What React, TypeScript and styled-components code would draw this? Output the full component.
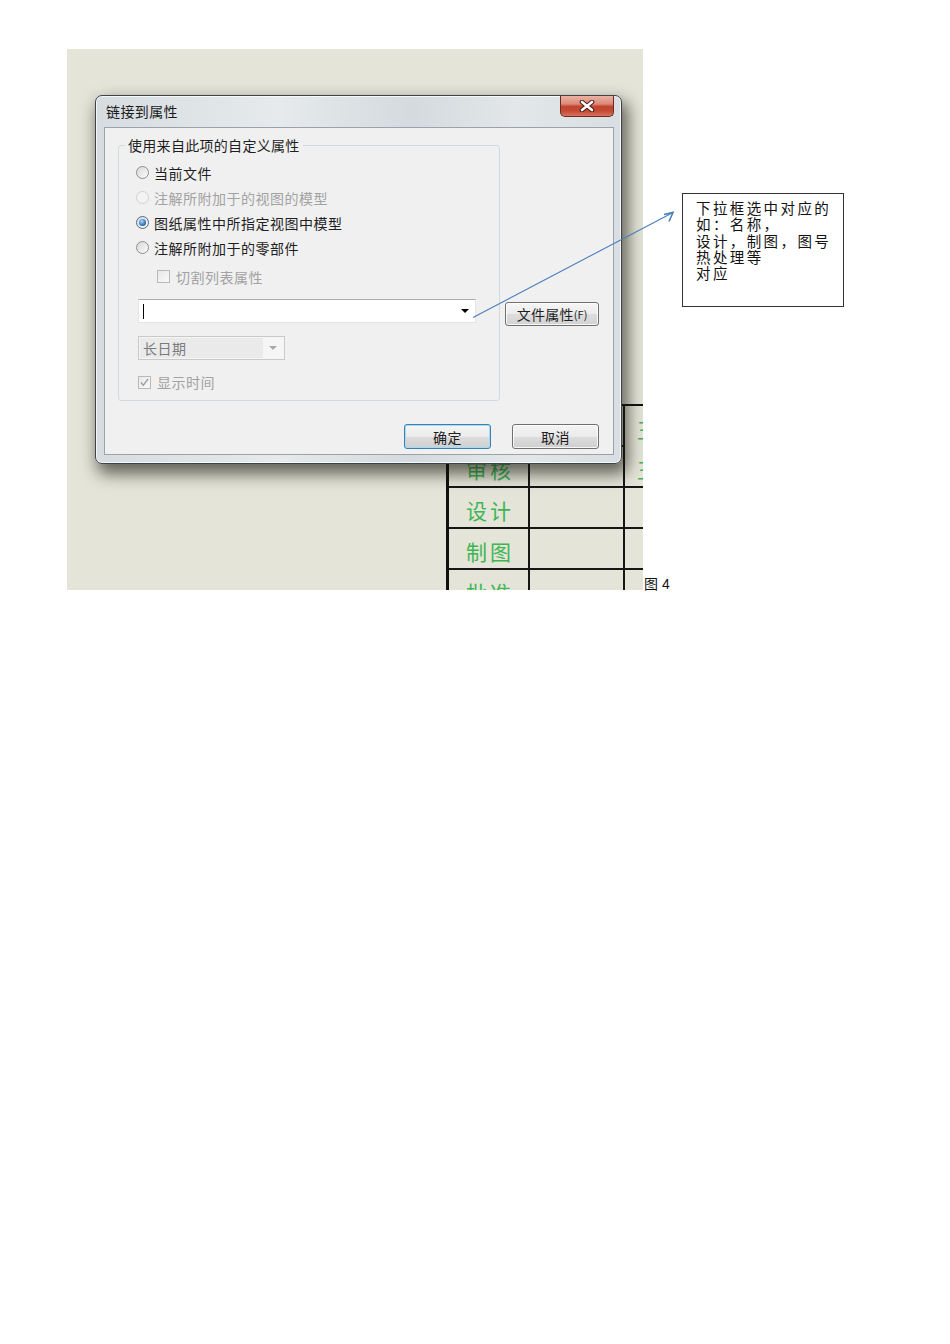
import React from 'react';
import styled, { createGlobalStyle } from 'styled-components';

const GlobalStyle = createGlobalStyle`
  html, body {
    margin: 0;
    padding: 0;
    background: #ffffff;
  }
  body {
    font-family: "Noto Sans CJK SC", "Liberation Sans", sans-serif;
  }
`;

const Page = styled.div`
  position: relative;
  width: 950px;
  height: 1344px;
  padding: 49px 0 0 67px;
  box-sizing: border-box;
`;

const FigureRow = styled.div`
  display: flex;
  align-items: flex-end;
`;

const Canvas = styled.div`
  position: relative;
  flex-shrink: 0;
  width: 576px;
  height: 541px;
  overflow: hidden;
  background: #e4e4d9;
`;

const Caption = styled.span`
  font-family: "Liberation Sans", "Noto Sans CJK SC", sans-serif;
  font-size: 14px;
  line-height: 16px;
  margin: 0 0 -2px 1px;
  color: #111;
`;

/* drawing sheet title block behind the dialog */
const TitleBlock = styled.div`
  position: absolute;
  left: 379px;
  top: 355px;
  display: grid;
  grid-template-columns: 81px 95px 120px;
  grid-auto-rows: 41px;
  border-left: 3px solid #111;
  border-top: 2px solid #111;
`;

const Cell = styled.div<{ $open?: boolean; $left?: boolean }>`
  box-sizing: border-box;
  border-right: 2px solid #161616;
  border-bottom: ${(p) => (p.$open ? 'none' : '2px solid #161616')};
  display: flex;
  align-items: center;
  justify-content: ${(p) => (p.$left ? 'flex-start' : 'center')};
  padding: 5px 0 0 ${(p) => (p.$left ? '12px' : '3px')};
  font-size: 21px;
  letter-spacing: 3px;
  color: #3db552;
`;

/* dialog window */
const Window = styled.div`
  position: absolute;
  left: 28px;
  top: 46px;
  width: 527px;
  height: 369px;
  box-sizing: border-box;
  display: flex;
  flex-direction: column;
  border: 1px solid #3d4347;
  border-radius: 7px;
  background: linear-gradient(90deg, #d6dce0 0%, #e6eaec 35%, #d4dade 60%, #e3e7e9 80%, #d8dee1 100%);
  box-shadow: inset 0 0 0 1px rgba(255, 255, 255, 0.75), 4px 8px 16px 2px rgba(20, 20, 10, 0.62);
  color: #1e1e1e;
`;

const TitleBar = styled.div`
  height: 31px;
  display: flex;
  align-items: flex-start;
  padding: 0 7px 0 10px;
`;

const Title = styled.span`
  font-size: 14px;
  letter-spacing: 0.4px;
  line-height: 31px;
  color: #1a1a1a;
`;

const CloseButton = styled.div`
  margin-left: auto;
  width: 54px;
  height: 21px;
  box-sizing: border-box;
  border: 1px solid #6e2a22;
  border-top: none;
  border-radius: 0 0 5px 5px;
  background: linear-gradient(#eab2a5 0%, #dc8a78 40%, #c4452e 52%, #c24a33 75%, #d9745f 100%);
  display: flex;
  align-items: center;
  justify-content: center;
`;

const Client = styled.div`
  flex: 1;
  margin: 0 7px 8px 8px;
  background: #f0f0f0;
  border: 1px solid #9aa3a9;
  display: flex;
  flex-direction: column;
`;

const Body = styled.div`
  display: flex;
  align-items: flex-start;
  padding: 17px 0 0 13px;
`;

const GroupBox = styled.div`
  width: 382px;
  height: 256px;
  box-sizing: border-box;
  border: 1px solid #d2dadf;
  border-radius: 3px;
`;

const Legend = styled.div`
  display: table;
  margin: -11px 0 0 6px;
  padding: 0 3px;
  background: #f0f0f0;
  font-size: 14px;
  line-height: 20px;
  letter-spacing: 0.3px;
`;

const Options = styled.div`
  display: flex;
  flex-direction: column;
  padding: 5px 0 0 17px;
`;

const OptionRow = styled.div<{ $disabled?: boolean }>`
  height: 25px;
  display: flex;
  align-items: center;
  gap: 5px;
  font-size: 14px;
  letter-spacing: 0.5px;
  color: ${(p) => (p.$disabled ? '#a2a2a2' : '#1e1e1e')};
`;

const Radio = styled.span<{ $checked?: boolean; $disabled?: boolean }>`
  width: 13px;
  height: 13px;
  box-sizing: border-box;
  border-radius: 50%;
  border: 1px solid ${(p) => (p.$disabled ? '#d2d2d2' : p.$checked ? '#506a86' : '#8c8e90')};
  background: ${(p) => (p.$disabled ? '#f3f3f3' : 'linear-gradient(135deg, #d8d8d8, #fbfbfb)')};
  display: flex;
  align-items: center;
  justify-content: center;
  &::after {
    content: '';
    display: ${(p) => (p.$checked ? 'block' : 'none')};
    width: 7px;
    height: 7px;
    border-radius: 50%;
    background: radial-gradient(circle at 40% 35%, #a8dcfb, #2e72b9 60%, #1c4c86);
  }
`;

const CheckRow = styled(OptionRow)<{ $indent: number; $top: number; $height?: number }>`
  margin: ${(p) => p.$top}px 0 0 ${(p) => p.$indent}px;
  height: ${(p) => p.$height ?? 25}px;
  gap: 6px;
`;

const CheckBox = styled.span`
  width: 13px;
  height: 13px;
  box-sizing: border-box;
  border: 1px solid #b9b9b9;
  background: linear-gradient(135deg, #e8e8e8, #fafafa);
  display: flex;
  align-items: center;
  justify-content: center;
`;

const Combo = styled.div`
  margin: 10px 0 0 2px;
  width: 338px;
  height: 24px;
  box-sizing: border-box;
  background: #ffffff;
  border: 1px solid #e3e4ea;
  border-top-color: #abadb3;
  display: flex;
  align-items: center;
  padding: 0 6px 0 4px;
`;

const Caret = styled.span`
  width: 1px;
  height: 15px;
  background: #000;
`;

const DropArrow = styled.span<{ $muted?: boolean }>`
  margin-left: auto;
  width: 0;
  height: 0;
  border-left: 4px solid transparent;
  border-right: 4px solid transparent;
  border-top: 4px solid ${(p) => (p.$muted ? '#a9a9a9' : '#000')};
`;

const DateSelect = styled.div`
  margin: 13px 0 0 2px;
  width: 147px;
  height: 24px;
  box-sizing: border-box;
  border: 1px solid #c9c9c9;
  background: #f5f5f5;
  display: flex;
  align-items: stretch;
  padding: 1px;
`;

const DateText = styled.span`
  width: 120px;
  background: #eaeaea;
  font-size: 14px;
  line-height: 20px;
  letter-spacing: 0.5px;
  padding-left: 3px;
  color: #7b7b7b;
`;

const DateArrowBox = styled.span`
  flex: 1;
  display: flex;
  align-items: center;
  padding-right: 6px;
`;

const SideColumn = styled.div`
  margin: 157px 0 0 5px;
`;

const FileButton = styled.div`
  width: 94px;
  height: 24px;
  box-sizing: border-box;
  border: 1px solid #707070;
  border-radius: 3px;
  background: linear-gradient(#f6f6f6, #ebebeb 50%, #dddddd 51%, #d2d2d2);
  box-shadow: inset 0 0 0 1px rgba(255, 255, 255, 0.8);
  display: flex;
  align-items: center;
  justify-content: center;
  font-size: 14px;
  letter-spacing: 0.3px;
`;

const Mnemonic = styled.span`
  font-size: 11px;
  letter-spacing: 0;
`;

const Footer = styled.div`
  display: flex;
  justify-content: flex-end;
  gap: 21px;
  margin-top: 23px;
  padding-right: 14px;
`;

const DialogButton = styled.div<{ $default?: boolean }>`
  width: 87px;
  height: 25px;
  box-sizing: border-box;
  border: 1px solid ${(p) => (p.$default ? '#3c7fb1' : '#707070')};
  border-radius: 3px;
  background: linear-gradient(#f4f4f4, #ebebeb 50%, #dddddd 51%, #cfcfcf);
  box-shadow: inset 0 0 0 1px ${(p) => (p.$default ? '#a6dcf7' : 'rgba(255, 255, 255, 0.8)')};
  display: flex;
  align-items: center;
  justify-content: center;
  font-size: 14px;
  letter-spacing: 0.5px;
`;

/* annotation on the page */
const Overlay = styled.svg`
  position: absolute;
  left: 0;
  top: 0;
  pointer-events: none;
`;

const NoteBox = styled.div`
  position: absolute;
  left: 682px;
  top: 193px;
  width: 162px;
  height: 114px;
  box-sizing: border-box;
  border: 1px solid #333;
  padding: 6px 0 0 13px;
  font-family: "Noto Sans CJK SC", serif;
  font-size: 14.5px;
  line-height: 16.3px;
  letter-spacing: 2.4px;
  color: #111;
  background: #fff;
`;

const radios = [
  { label: '当前文件' },
  { label: '注解所附加于的视图的模型', disabled: true },
  { label: '图纸属性中所指定视图中模型', checked: true },
  { label: '注解所附加于的零部件' },
];

const noteLines = ['下拉框选中对应的', '如：名称，', '设计，制图，图号', '热处理等', '对应'];

export default function App() {
  return (
    <>
      <GlobalStyle />
      <Page>
        <FigureRow>
          <Canvas>
            <TitleBlock>
              <Cell />
              <Cell />
              <Cell $open $left>王</Cell>
              <Cell>审核</Cell>
              <Cell />
              <Cell $left>王</Cell>
              <Cell>设计</Cell>
              <Cell />
              <Cell />
              <Cell>制图</Cell>
              <Cell />
              <Cell />
              <Cell>批准</Cell>
              <Cell />
              <Cell />
            </TitleBlock>

            <Window>
              <TitleBar>
                <Title>链接到属性</Title>
                <CloseButton>
                  <svg width="16" height="12" viewBox="0 0 16 12">
                    <path d="M3 2 L13 10 M13 2 L3 10" stroke="#4a1d17" strokeWidth="4.6" strokeLinecap="round" />
                    <path d="M3 2 L13 10 M13 2 L3 10" stroke="#ffffff" strokeWidth="2.6" strokeLinecap="round" />
                  </svg>
                </CloseButton>
              </TitleBar>
              <Client>
                <Body>
                  <GroupBox>
                    <Legend>使用来自此项的自定义属性</Legend>
                    <Options>
                      {radios.map((r) => (
                        <OptionRow key={r.label} $disabled={r.disabled}>
                          <Radio $checked={r.checked} $disabled={r.disabled} />
                          {r.label}
                        </OptionRow>
                      ))}
                      <CheckRow $disabled $indent={21} $top={4}>
                        <CheckBox />
                        切割列表属性
                      </CheckRow>
                      <Combo>
                        <Caret />
                        <DropArrow />
                      </Combo>
                      <DateSelect>
                        <DateText>长日期</DateText>
                        <DateArrowBox>
                          <DropArrow $muted />
                        </DateArrowBox>
                      </DateSelect>
                      <CheckRow $disabled $indent={2} $top={12} $height={20}>
                        <CheckBox>
                          <svg width="11" height="11" viewBox="0 0 11 11">
                            <path d="M2 5.5 L4.3 8.3 L9 2" stroke="#9a9a9a" strokeWidth="1.3" fill="none" />
                          </svg>
                        </CheckBox>
                        显示时间
                      </CheckRow>
                    </Options>
                  </GroupBox>
                  <SideColumn>
                    <FileButton>
                      文件属性<Mnemonic>(F)</Mnemonic>
                    </FileButton>
                  </SideColumn>
                </Body>
                <Footer>
                  <DialogButton $default>确定</DialogButton>
                  <DialogButton>取消</DialogButton>
                </Footer>
              </Client>
            </Window>
          </Canvas>
          <Caption>图 4</Caption>
        </FigureRow>

        <Overlay width="950" height="700">
          <path d="M473 317.5 L673 212.5" stroke="#4a7ebb" strokeWidth="1.1" fill="none" />
          <path d="M664 214.5 L673 212.5 L669 221.5" stroke="#4a7ebb" strokeWidth="1.6" fill="none" />
        </Overlay>

        <NoteBox>
          {noteLines.map((l) => (
            <div key={l}>{l}</div>
          ))}
        </NoteBox>
      </Page>
    </>
  );
}
